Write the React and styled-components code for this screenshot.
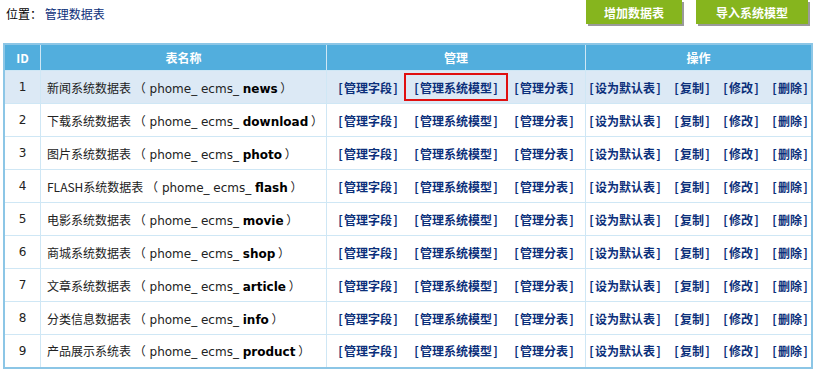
import styled, { createGlobalStyle } from 'styled-components';

const GlobalStyle = createGlobalStyle`
  body {
    margin: 0;
    background: #ffffff;
    font-family: "DejaVu Sans", "Noto Sans CJK SC", sans-serif;
    font-size: 12px;
  }
`;

const Page = styled.div`
  width: 815px;
  padding: 0 0 0 3px;
  box-sizing: border-box;
`;

const TopBar = styled.div`
  display: flex;
  justify-content: space-between;
  align-items: flex-start;
  height: 43px;
`;

const Crumb = styled.div`
  padding: 5px 0 0 3px;
  color: #000;
  font-family: "Noto Sans CJK SC", sans-serif;
  font-size: 12px;

  a {
    color: #0b2f7a;
    text-decoration: none;
  }
`;

const Actions = styled.div`
  display: flex;
  gap: 14px;
  padding-right: 7px;
`;

const GreenButton = styled.button`
  width: ${(p) => p.$w}px;
  height: 24px;
  border: none;
  background: #86b51e;
  color: #ffffff;
  font-family: "Noto Sans CJK SC", sans-serif;
  font-weight: bold;
  font-size: 12px;
  box-shadow: 2px 2px 0 #9a9a9a;
  cursor: pointer;
  padding: 0;
`;

const Table = styled.table`
  width: 810px;
  table-layout: fixed;
  border-collapse: collapse;
  border: 2px solid #8cc6e6;
`;

const HeadCell = styled.th`
  height: 25px;
  background: #52aedd;
  color: #ffffff;
  font-family: "Noto Sans CJK SC", sans-serif;
  font-size: 12px;
  font-weight: bold;
  text-align: center;
  border: 1px solid #cfe7f5;
  width: ${(p) => (p.$w ? `${p.$w}px` : 'auto')};
  padding: 0;
`;

const Row = styled.tr`
  height: 33px;
  background: ${(p) => (p.$active ? '#dce9f5' : '#ffffff')};
`;

const Cell = styled.td`
  border: 1px solid #cfe7f5;
  padding: 0 ${(p) => (p.$left ? '6px' : '0')};
  text-align: ${(p) => (p.$left ? 'left' : 'center')};
  color: #222;
  font-size: 12px;
  white-space: nowrap;
`;

const Cn = styled.span`
  font-family: "Noto Sans CJK SC", sans-serif;
`;

const Key = styled.b`
  color: #000;
`;

const Links = styled.div`
  display: flex;
  justify-content: center;
  gap: ${(p) => p.$gap}px;
`;

const Link = styled.a`
  position: relative;
  display: inline-flex;
  color: #0b2f7a;
  font-family: "Noto Sans CJK SC", sans-serif;
  font-weight: bold;
  font-size: 12px;
  text-decoration: none;

  ${(p) =>
    p.$mark &&
    `
    &::after {
      content: '';
      position: absolute;
      left: -9px;
      right: -9px;
      top: -6px;
      bottom: -5px;
      border: 2px solid #e01010;
    }
  `}
`;

const Bracket = styled.span`
  display: inline-block;
  width: 7px;
  text-align: center;
`;

const tables = [
  ['新闻系统数据表', 'news'],
  ['下载系统数据表', 'download'],
  ['图片系统数据表', 'photo'],
  ['FLASH系统数据表', 'flash'],
  ['电影系统数据表', 'movie'],
  ['商城系统数据表', 'shop'],
  ['文章系统数据表', 'article'],
  ['分类信息数据表', 'info'],
  ['产品展示系统表', 'product'],
];

const manage = ['管理字段', '管理系统模型', '管理分表'];
const ops = ['设为默认表', '复制', '修改', '删除'];

function ActionLink({ label, mark }) {
  return (
    <Link href="#" $mark={mark}>
      <Bracket>[</Bracket>
      {label}
      <Bracket>]</Bracket>
    </Link>
  );
}

export default function App() {
  return (
    <Page>
      <GlobalStyle />
      <TopBar>
        <Crumb>
          位置： <a href="#">管理数据表</a>
        </Crumb>
        <Actions>
          <GreenButton $w={96}>增加数据表</GreenButton>
          <GreenButton $w={112}>导入系统模型</GreenButton>
        </Actions>
      </TopBar>
      <Table>
        <thead>
          <tr>
            <HeadCell $w={35}>ID</HeadCell>
            <HeadCell $w={285}>表名称</HeadCell>
            <HeadCell $w={258}>管理</HeadCell>
            <HeadCell>操作</HeadCell>
          </tr>
        </thead>
        <tbody>
          {tables.map(([name, key], i) => (
            <Row key={key} $active={i === 0}>
              <Cell>{i + 1}</Cell>
              <Cell $left>
                <Cn>{name} （</Cn> phome_ ecms_ <Key>{key}</Key>
                <Cn> ）</Cn>
              </Cell>
              <Cell>
                <Links $gap={14}>
                  {manage.map((m, j) => (
                    <ActionLink key={m} label={m} mark={i === 0 && j === 1} />
                  ))}
                </Links>
              </Cell>
              <Cell>
                <Links $gap={11}>
                  {ops.map((o) => (
                    <ActionLink key={o} label={o} />
                  ))}
                </Links>
              </Cell>
            </Row>
          ))}
        </tbody>
      </Table>
    </Page>
  );
}
